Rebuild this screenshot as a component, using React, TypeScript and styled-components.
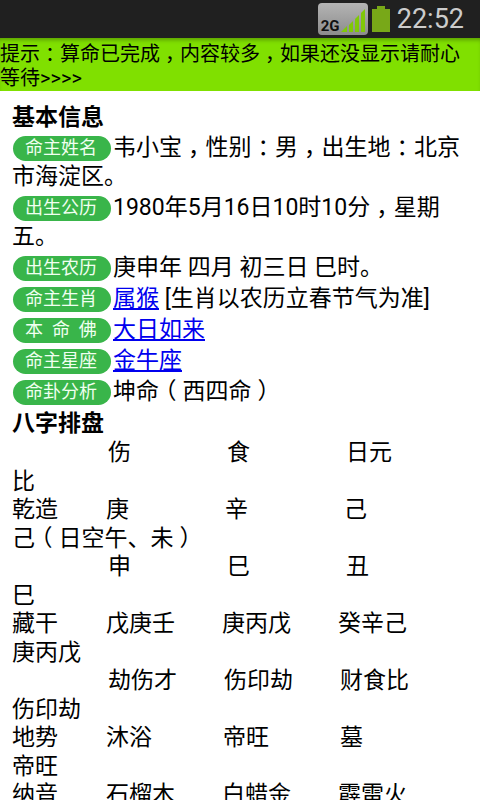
import React from "react";
import styled, { createGlobalStyle } from "styled-components";

const GlobalStyle = createGlobalStyle`
  body {
    margin: 0;
    background: #ffffff;
    color: #000000;
    font-family: Roboto, "Noto Sans CJK SC", sans-serif;
  }
`;

const Screen = styled.div`
  height: 100vh;
  display: flex;
  flex-direction: column;
  overflow: hidden;
`;

const StatusBar = styled.header`
  flex: none;
  height: 38px;
  display: flex;
  align-items: center;
  justify-content: flex-end;
  padding-right: 16px;
  background: #202020;
`;

const SignalBox = styled.div`
  display: flex;
  align-items: flex-end;
  box-sizing: border-box;
  width: 50px;
  height: 32px;
  padding: 0 2px 2px 3px;
  border-radius: 4px;
  background: linear-gradient(#b4b4b4, #8c8c8c);
`;

const Network = styled.span`
  flex: 1;
  color: #111111;
  font-size: 15px;
  line-height: 13px;
  font-weight: 700;
`;

const SignalBars = styled.svg`
  flex: none;
`;

const Battery = styled.svg`
  flex: none;
  margin: 0 7px 0 4px;
`;

const Clock = styled.time`
  color: #cccccc;
  font-size: 27px;
  line-height: 38px;
`;

const Notice = styled.p`
  flex: none;
  margin: 0;
  padding: 4px 4px 1px 0;
  background: #80e000;
  box-shadow: inset 0 4px 4px -2px rgba(0, 0, 0, 0.3);
  font-size: 20px;
  line-height: 24px;
`;

const Content = styled.main`
  flex: 1;
  min-height: 0;
  overflow: hidden;
  padding: 13px 12px 0;
  font-size: 23px;
  line-height: 28px;
`;

const Heading = styled.h2`
  margin: 0;
  font-size: 23px;
  line-height: 28px;
  font-weight: 700;

  p + & {
    margin-top: 3px;
  }
`;

const Entry = styled.p<{ $long?: boolean }>`
  margin: 0;
  padding-bottom: ${(p) => (p.$long ? 1 : 0)}px;
`;

const Badge = styled.span`
  display: inline-block;
  box-sizing: border-box;
  width: 98px;
  height: 25px;
  margin: 4px 2px 2px 1px;
  padding-left: 12px;
  vertical-align: -8px;
  border-radius: 13px;
  background: #39b54a;
  color: #f0fff0;
  font-size: 18px;
  line-height: 24px;
  white-space: pre;
  overflow: hidden;
`;

const Link = styled.a`
  color: #0000ee;
  text-decoration: underline;
  text-decoration-thickness: 2px;
  text-underline-offset: 2px;
`;

const CenteredMark = styled.span<{ $pad: number }>`
  padding: 0 ${(p) => p.$pad}px;
  font-feature-settings: "halt";
`;

const Chart = styled.table`
  display: block;
  margin-top: 1px;
  border-collapse: collapse;

  tbody {
    display: block;
  }
`;

const ChartRow = styled.tr<{ $indent: boolean; $pitch: number }>`
  display: grid;
  grid-template-columns: ${(p) => (p.$indent ? 96 : 94)}px ${(p) => p.$pitch}px ${(p) => p.$pitch}px 1fr;
  grid-template-rows: 29px 28px;
`;

const RowLabel = styled.th`
  padding: 0;
  text-align: left;
  font-weight: 400;
`;

const Cell = styled.td<{ $wrapped?: boolean }>`
  padding: 0;
  white-space: nowrap;
  grid-column: ${(p) => (p.$wrapped ? "1 / -1" : "auto")};
`;

function Text({ children, pad = 6 }: { children: string; pad?: number }) {
  return (
    <>
      {children.split(/([，：（）])/).map((part, i) =>
        i % 2 ? (
          <CenteredMark key={i} $pad={pad}>
            {part}
          </CenteredMark>
        ) : (
          part
        ),
      )}
    </>
  );
}

const chart: { pitch: number; cells: string[] }[] = [
  { pitch: 119, cells: ["", "伤", "食", "日元", "比"] },
  { pitch: 119, cells: ["乾造", "庚", "辛", "己", "己（日空午、未）"] },
  { pitch: 119, cells: ["", "申", "巳", "丑", "巳"] },
  { pitch: 116, cells: ["藏干", "戊庚壬", "庚丙戊", "癸辛己", "庚丙戊"] },
  { pitch: 116, cells: ["", "劫伤才", "伤印劫", "财食比", "伤印劫"] },
  { pitch: 117, cells: ["地势", "沐浴", "帝旺", "墓", "帝旺"] },
  { pitch: 116, cells: ["纳音", "石榴木", "白蜡金", "霹雷火", "白蜡金"] },
];

export default function App() {
  return (
    <>
      <GlobalStyle />
      <Screen>
        <StatusBar>
          <SignalBox>
            <Network>2G</Network>
            <SignalBars width="25" height="26" viewBox="0 0 25 26" aria-hidden="true">
              <path
                fill="#80c808"
                d="M0 25l6-6v6zM8 18l4-4v11H8zM14 12l4-4v17h-4zM20 6l4-4v23h-4z"
              />
            </SignalBars>
          </SignalBox>
          <Battery width="18" height="26" viewBox="0 0 18 26" aria-hidden="true">
            <path fill="#78a818" d="M5 0h8v3h5v23H0V3h5z" />
          </Battery>
          <Clock>22:52</Clock>
        </StatusBar>
        <Notice>
          <Text pad={5}>{"提示：算命已完成，内容较多，如果还没显示请耐心等待>>>>"}</Text>
        </Notice>
        <Content>
          <Heading>基本信息</Heading>
          <Entry $long>
            <Badge>命主姓名</Badge>
            <Text>韦小宝，性别：男，出生地：北京市海淀区。</Text>
          </Entry>
          <Entry $long>
            <Badge>出生公历</Badge>
            <Text>1980年5月16日10时10分，星期五。</Text>
          </Entry>
          <Entry>
            <Badge>出生农历</Badge>
            庚申年 四月 初三日 巳时。
          </Entry>
          <Entry>
            <Badge>命主生肖</Badge>
            <Link href="#zodiac">属猴</Link> [生肖以农历立春节气为准]
          </Entry>
          <Entry>
            <Badge>{"本  命  佛"}</Badge>
            <Link href="#buddha">大日如来</Link>
          </Entry>
          <Entry>
            <Badge>命主星座</Badge>
            <Link href="#constellation">金牛座</Link>
          </Entry>
          <Entry>
            <Badge>命卦分析</Badge>
            <Text>坤命（西四命）</Text>
          </Entry>
          <Heading>八字排盘</Heading>
          <Chart>
            <tbody>
              {chart.map(({ pitch, cells }, i) => (
                <ChartRow key={i} $indent={!cells[0]} $pitch={pitch}>
                  <RowLabel scope="row">{cells[0]}</RowLabel>
                  <Cell>{cells[1]}</Cell>
                  <Cell>{cells[2]}</Cell>
                  <Cell>{cells[3]}</Cell>
                  <Cell $wrapped>
                    <Text>{cells[4]}</Text>
                  </Cell>
                </ChartRow>
              ))}
            </tbody>
          </Chart>
        </Content>
      </Screen>
    </>
  );
}
